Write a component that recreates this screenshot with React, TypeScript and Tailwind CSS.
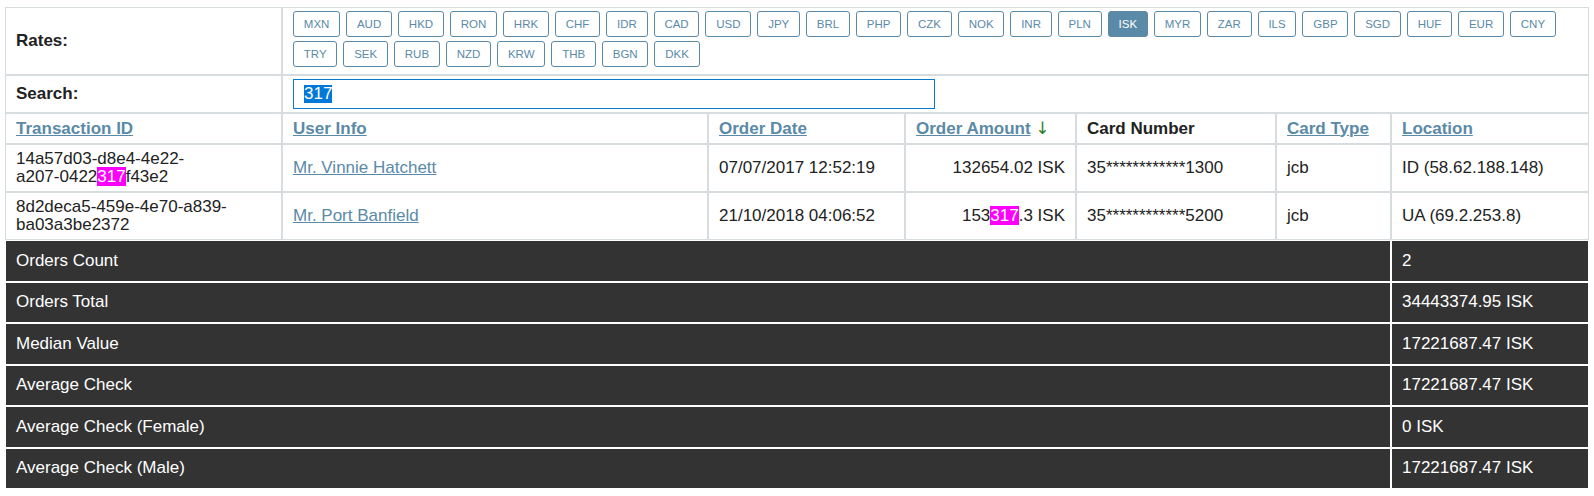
import React from "react";

const currencies = [
  "MXN", "AUD", "HKD", "RON", "HRK", "CHF", "IDR", "CAD", "USD", "JPY", "BRL", "PHP",
  "CZK", "NOK", "INR", "PLN", "ISK", "MYR", "ZAR", "ILS", "GBP", "SGD", "HUF", "EUR",
  "CNY", "TRY", "SEK", "RUB", "NZD", "KRW", "THB", "BGN", "DKK",
];

const summary = [
  { label: "Orders Count", value: "2" },
  { label: "Orders Total", value: "34443374.95 ISK" },
  { label: "Median Value", value: "17221687.47 ISK" },
  { label: "Average Check", value: "17221687.47 ISK" },
  { label: "Average Check (Female)", value: "0 ISK" },
  { label: "Average Check (Male)", value: "17221687.47 ISK" },
];

const Mark = ({ children }: { children: React.ReactNode }) => (
  <span className="bg-[#ff00ff] text-white">{children}</span>
);

const td = "border border-[#d7dcdf] px-[10px] py-[5px] align-middle";
const dark = "border border-white bg-[#333333] text-white px-[10px] py-[10.75px]";
const link = "text-[#5a8aa8] underline";

export default function App() {
  return (
    <div className="min-h-screen bg-white pl-[5px] pt-[7px] font-['Liberation_Sans',Arial,sans-serif] text-[17px] leading-[18px] text-[#222]">
      <table className="w-[1584px] table-fixed border-separate border-spacing-0">
        <colgroup>
          <col className="w-[277px]" />
          <col className="w-[426px]" />
          <col className="w-[197px]" />
          <col className="w-[171px]" />
          <col className="w-[200px]" />
          <col className="w-[115px]" />
          <col className="w-[198px]" />
        </colgroup>
        <tbody>
          <tr>
            <td className={`${td} font-bold`}>Rates:</td>
            <td colSpan={6} className="border border-[#d7dcdf] px-[10px] py-[3px]">
              <div className="flex flex-wrap gap-x-[6px] gap-y-[4px] pb-[4px]">
                {currencies.map((c) => (
                  <button
                    key={c}
                    className={
                      c === "ISK"
                        ? "h-[26px] rounded-[3px] border border-[#5a8aa8] bg-[#5a8aa8] px-[9.8px] text-[11.5px] leading-[24px] text-white"
                        : "h-[26px] rounded-[3px] border border-[#5a8aa8] bg-white px-[9.8px] text-[11.5px] leading-[24px] text-[#5a8aa8]"
                    }
                  >
                    {c}
                  </button>
                ))}
              </div>
            </td>
          </tr>
          <tr>
            <td className={`${td} font-bold`}>Search:</td>
            <td colSpan={6} className="border border-[#d7dcdf] px-[10px] py-[3px]">
              <div className="flex h-[30px] w-[642px] items-center border border-[#0b79d0] px-[10px]">
                <span className="bg-[#0078d7] text-white">317</span>
              </div>
            </td>
          </tr>
          <tr className="font-bold">
            <td className={td}><span className={link}>Transaction ID</span></td>
            <td className={td}><span className={link}>User Info</span></td>
            <td className={td}><span className={link}>Order Date</span></td>
            <td className={td}>
              <span className={link}>Order Amount</span>{" "}
              <span className="font-['DejaVu_Sans',sans-serif] font-normal text-[#2e7d32]">↓</span>
            </td>
            <td className={td}>Card Number</td>
            <td className={td}><span className={link}>Card Type</span></td>
            <td className={td}><span className={link}>Location</span></td>
          </tr>
          <tr>
            <td className={td}>
              14a57d03-d8e4-4e22-
              <br />
              a207-0422<Mark>317</Mark>f43e2
            </td>
            <td className={td}><span className={link}>Mr. Vinnie Hatchett</span></td>
            <td className={td}>07/07/2017 12:52:19</td>
            <td className={`${td} text-right`}>132654.02 ISK</td>
            <td className={td}>35************1300</td>
            <td className={td}>jcb</td>
            <td className={td}>ID (58.62.188.148)</td>
          </tr>
          <tr>
            <td className={td}>
              8d2deca5-459e-4e70-a839-
              <br />
              ba03a3be2372
            </td>
            <td className={td}><span className={link}>Mr. Port Banfield</span></td>
            <td className={td}>21/10/2018 04:06:52</td>
            <td className={`${td} text-right`}>
              153<Mark>317</Mark>.3 ISK
            </td>
            <td className={td}>35************5200</td>
            <td className={td}>jcb</td>
            <td className={td}>UA (69.2.253.8)</td>
          </tr>
          {summary.map((s) => (
            <tr key={s.label}>
              <td colSpan={6} className={dark}>{s.label}</td>
              <td className={dark}>{s.value}</td>
            </tr>
          ))}
        </tbody>
      </table>
    </div>
  );
}
